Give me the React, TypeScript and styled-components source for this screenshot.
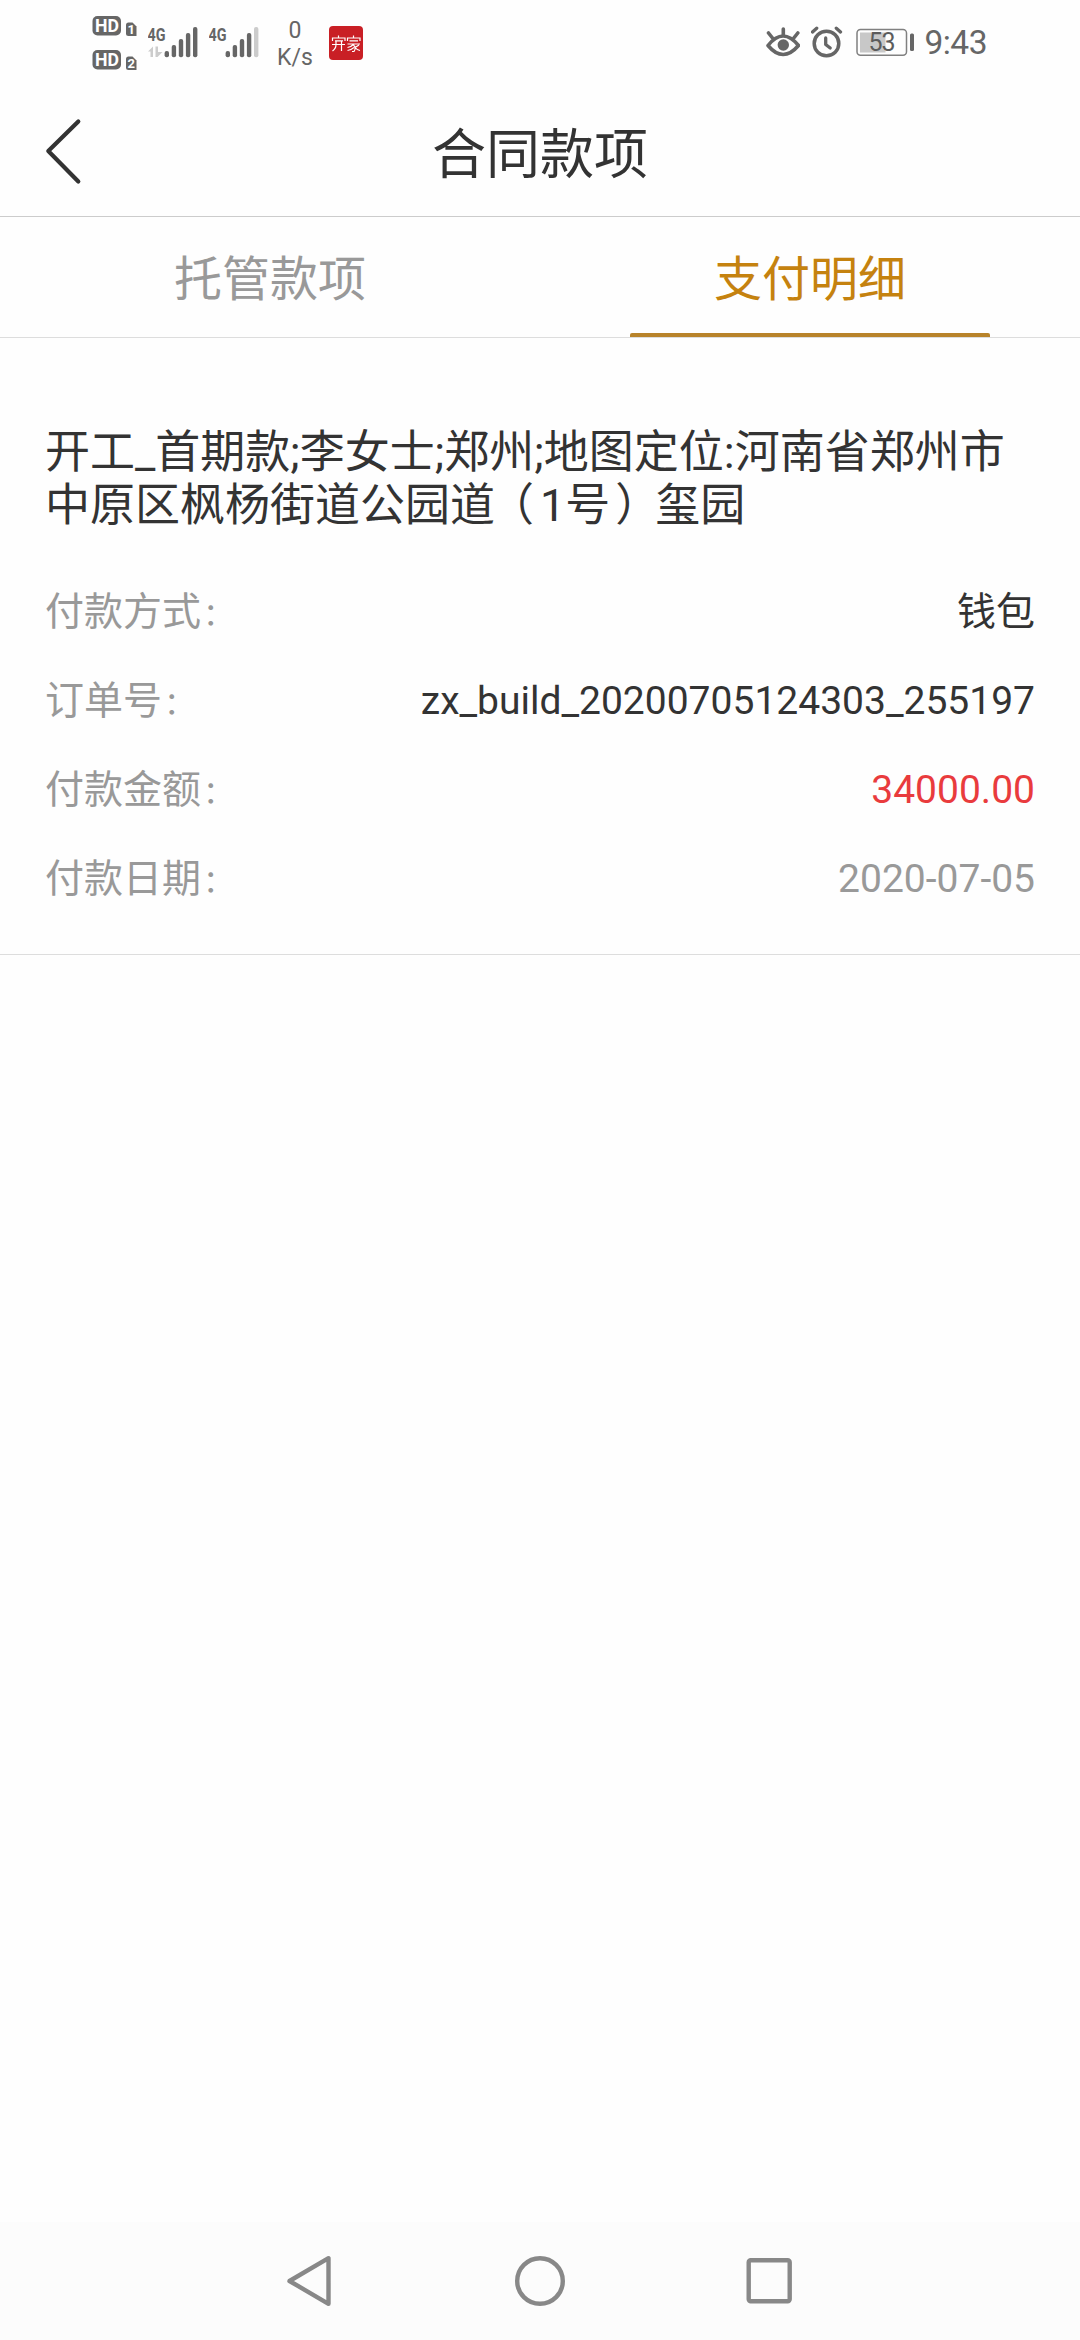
import React from "react";
import styled, { createGlobalStyle } from "styled-components";

const GlobalStyle = createGlobalStyle`
  *, *::before, *::after { box-sizing: border-box; }
  body {
    margin: 0;
    background: #fefefe;
    font-family: Roboto, "Noto Sans CJK SC", sans-serif;
    color: #333;
  }
`;

const Screen = styled.div`
  display: flex;
  flex-direction: column;
  width: 1080px;
  height: 2340px;
  background: #fefefe;
  overflow: hidden;
`;

const StatusBar = styled.div`
  display: flex;
  flex: none;
  justify-content: space-between;
  height: 88px;
  padding: 0 93px 0 92px;
  color: #666;
`;

const StatusGroup = styled.div`
  display: flex;
  align-items: flex-start;
`;

const StatusIcon = styled.svg<{ $gap?: number }>`
  flex: none;
  display: block;
  margin-left: ${(p) => p.$gap ?? 0}px;
`;

const NetSpeed = styled.div`
  width: 40px;
  margin-left: 16px;
  padding-top: 17px;
  font-size: 23px;
  line-height: 27px;
  text-align: center;
`;

const Clock = styled.div`
  margin-left: 9px;
  font-size: 33.5px;
  line-height: 86px;
  letter-spacing: -0.5px;
`;

const Header = styled.header`
  display: grid;
  grid-template-columns: 160px 1fr 160px;
  align-items: center;
  flex: none;
  height: 129px;
  border-bottom: 1px solid #ccc;
`;

const BackButton = styled.button`
  display: flex;
  height: 128px;
  padding: 0 0 0 42px;
  align-items: center;
  border: 0;
  background: none;
`;

const Title = styled.h1`
  margin: 0;
  padding-top: 8px;
  font-size: 54px;
  font-weight: 400;
  line-height: 120px;
  text-align: center;
`;

const Tabs = styled.nav`
  display: flex;
  flex: none;
  height: 121px;
  border-bottom: 1px solid #ddd;
`;

const Tab = styled.div<{ $active?: boolean }>`
  display: flex;
  flex: 1;
  flex-direction: column;
  align-items: center;
  padding-top: 10px;
  font-size: 48px;
  line-height: 106px;
  color: ${(p) => (p.$active ? "#c5820f" : "#999")};
  &::after {
    content: "";
    width: 360px;
    height: 4px;
    border-radius: 2px 2px 0 0;
    background: ${(p) => (p.$active ? "#b8832a" : "transparent")};
  }
`;

const Payment = styled.section`
  flex: none;
  height: 617px;
  padding: 88px 45px 0;
  border-bottom: 1px solid #ddd;
`;

const Description = styled.p`
  margin: 0 0 36px;
  font-size: 45px;
  line-height: 53px;
`;

const Paren = styled.span<{ $before: number; $after: number }>`
  margin-left: ${(p) => p.$before}px;
  margin-right: ${(p) => p.$after}px;
  font-feature-settings: "halt";
`;

const Row = styled.div`
  display: flex;
  justify-content: space-between;
  height: 89px;
  font-size: 39px;
  line-height: 89px;
`;

const Label = styled.span`
  color: #999;
`;

const Colon = styled.span`
  margin-left: 2px;
  font-size: 31px;
`;

const Value = styled.span<{ $color?: string }>`
  color: ${(p) => p.$color ?? "#333"};
`;

const NavBar = styled.footer`
  display: flex;
  flex: none;
  justify-content: center;
  gap: 170px;
  height: 118px;
  margin-top: auto;
  align-items: center;
  background: #fcfcfc;
`;

function HdBadges() {
  return (
    <StatusIcon width="46" height="86" viewBox="92 0 46 86">
      {[0, 34].map((dy, i) => (
        <g key={dy} transform={`translate(0 ${dy})`}>
          <rect x="92.5" y="16" width="28.5" height="19.5" rx="5" fill="#666" />
          <text x="95" y="32.3" fontSize="18.5" fontWeight="700" fill="#fff" textLength="24" lengthAdjust="spacingAndGlyphs">HD</text>
          <path d="M126 25a2.5 2.5 0 0 1 2.5-2.5h4l4 4V36h-8a2.5 2.5 0 0 1-2.5-2.5z" fill="#666" />
          <text x="131.2" y="34" fontSize="13" fontWeight="700" fill="#fff" textAnchor="middle">{i + 1}</text>
        </g>
      ))}
    </StatusIcon>
  );
}

function Signal({ gap, full, arrows }: { gap: number; full?: boolean; arrows?: boolean }) {
  return (
    <StatusIcon $gap={gap} width="50" height="86" viewBox="0 0 50 86">
      <text x="-0.5" y="40.8" fontSize="19" fontWeight="700" fill="#666" textLength="18" lengthAdjust="spacingAndGlyphs">4G</text>
      {arrows && <path d="M0 51.5l5-5V57H2.500v-5.500zM7.500 46.500h2.500v5.500h4.500l-5 5h-2z" fill="#ccc" />}
      {[51, 45, 39, 33, 27].map((y, i) => (
        <rect
          key={y}
          x={16.6 + i * 7.1}
          y={y}
          width="4.4"
          height={57.3 - y}
          rx="2"
          fill={i === 4 && !full ? "#ccc" : "#666"}
        />
      ))}
    </StatusIcon>
  );
}

function QijiaIcon() {
  return (
    <StatusIcon $gap={14} width="34" height="86" viewBox="0 0 34 86">
      <rect y="26" width="34" height="34" rx="4" fill="#c91f25" />
      <g fill="none" stroke="#fff" strokeWidth="1.2">
        <path d="M9.5 35.5v2.500M3.500 41v-3h12.500v3M6 40.800h8M3 44.500h13M7 41v3.500q0 4-3.500 6.500M12.500 41v10" />
        <path d="M24.500 35.500v2.500M18.500 41v-3H31v3M20.500 40.800h8.500M18.500 44h12.500M25 44q-3 3-6.500 3.500M24.500 45q3 3 .5 6.500h-2M25 47.500q-3 2.500-6.500 3M30 45l-4 2.500q2 2.500 5 3" />
      </g>
    </StatusIcon>
  );
}

function EyeIcon() {
  return (
    <StatusIcon width="34" height="86" viewBox="0 0 34 86" fill="none" stroke="#666" strokeWidth="3.6">
      <path d="M2 45.500q15-19 30.500 0q-15.500 18-30.500 0z" strokeLinejoin="round" />
      <path d="M17.300 35v-6M6.500 38l-4-5M27.800 38l4-5" strokeLinecap="round" />
      <circle cx="17.3" cy="45" r="5.7" fill="#666" stroke="none" />
    </StatusIcon>
  );
}

function AlarmIcon() {
  return (
    <StatusIcon $gap={11} width="32" height="86" viewBox="0 0 32 86" fill="none" stroke="#666">
      <circle cx="15.5" cy="43.5" r="12.3" strokeWidth="3.5" />
      <path d="M14.700 38v6.500l4.500 3.500" strokeWidth="3.3" strokeLinecap="round" strokeLinejoin="round" />
      <path d="M1.500 32l4.200-3.800M29.500 32l-4.200-3.800" strokeWidth="3.3" strokeLinecap="round" />
    </StatusIcon>
  );
}

function Battery() {
  return (
    <StatusIcon $gap={13} width="59" height="86" viewBox="0 0 59 86">
      <rect x="1" y="29.5" width="49.5" height="25.8" rx="3.5" fill="none" stroke="#808080" strokeWidth="1.5" />
      <rect x="4" y="32.5" width="25.5" height="20" fill="#c8c8c8" />
      <rect x="54" y="33.5" width="4" height="17.5" rx="1.5" fill="#666" />
      <text x="26" y="51" fontSize="25" fill="#5c5c5c" textAnchor="middle" textLength="27">53</text>
    </StatusIcon>
  );
}

const payment: { label: string; value: string; color?: string }[] = [
  { label: "付款方式", value: "钱包" },
  { label: "订单号", value: "zx_build_20200705124303_255197" },
  { label: "付款金额", value: "34000.00", color: "#e93b3d" },
  { label: "付款日期", value: "2020-07-05", color: "#999" },
];

export default function App() {
  return (
    <>
      <GlobalStyle />
      <Screen>
        <StatusBar>
          <StatusGroup>
            <HdBadges />
            <Signal gap={10} full arrows />
            <Signal gap={11} />
            <NetSpeed>
              0<br />
              K/s
            </NetSpeed>
            <QijiaIcon />
          </StatusGroup>
          <StatusGroup>
            <EyeIcon />
            <AlarmIcon />
            <Battery />
            <Clock>9:43</Clock>
          </StatusGroup>
        </StatusBar>
        <Header>
          <BackButton aria-label="返回">
            <svg width="42" height="70" viewBox="0 0 42 70" fill="none" stroke="#333" strokeWidth="4.2" strokeLinecap="round" strokeLinejoin="round">
              <path d="M36.300 4.500L6.300 34L36.300 64.500" />
            </svg>
          </BackButton>
          <Title>合同款项</Title>
        </Header>
        <Tabs>
          <Tab>托管款项</Tab>
          <Tab $active>支付明细</Tab>
        </Tabs>
        <Payment>
          <Description>
            开工_首期款;李女士;郑州;地图定位:河南省郑州市中原区枫杨街道公园道<Paren $before={16.5} $after={6}>（</Paren>1号<Paren $before={5} $after={17.5}>）</Paren>玺园
          </Description>
          {payment.map((item) => (
            <Row key={item.label}>
              <Label>
                {item.label}
                <Colon>：</Colon>
              </Label>
              <Value $color={item.color}>{item.value}</Value>
            </Row>
          ))}
        </Payment>
        <NavBar>
          <svg width="60" height="60" viewBox="0 0 60 60" fill="none" stroke="#888" strokeWidth="4.4" strokeLinejoin="round">
            <path d="M48.500 7.200V52.800L9.500 30z" />
          </svg>
          <svg width="60" height="60" viewBox="0 0 60 60" fill="none" stroke="#888" strokeWidth="4.4">
            <circle cx="30" cy="30" r="22.8" />
          </svg>
          <svg width="60" height="60" viewBox="0 0 60 60" fill="none" stroke="#888" strokeWidth="4.4">
            <rect x="8.7" y="9.2" width="41" height="41" rx="2" />
          </svg>
        </NavBar>
      </Screen>
    </>
  );
}
